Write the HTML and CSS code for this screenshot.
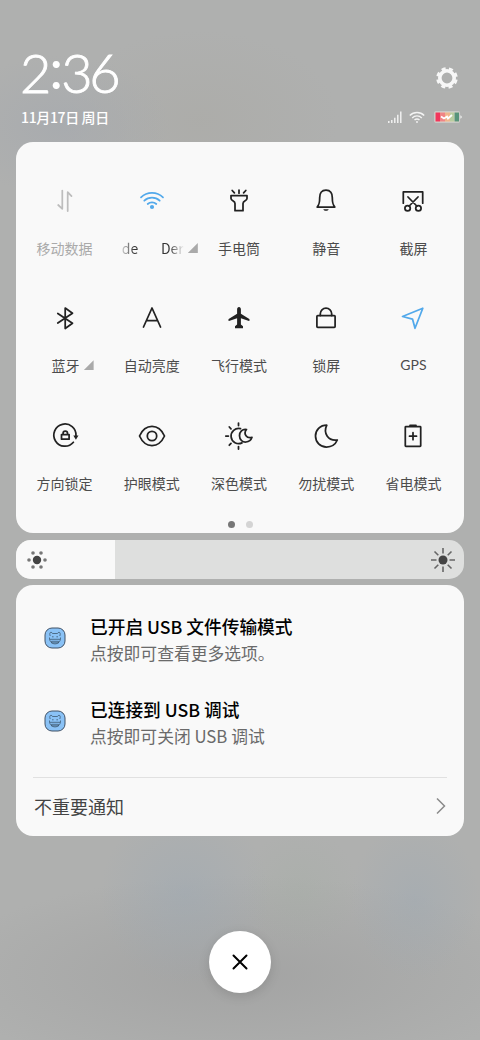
FILE: index.html
```html
<!DOCTYPE html>
<html lang="zh-CN">
<head>
<meta charset="utf-8">
<title>控制中心</title>
<link rel="stylesheet" href="styles.css">
</head>
<body>
<div class="shade">
  <header class="header">
    <div class="clock-row">
      <div class="clock"><span>2</span><span class="colon">:</span><span>3</span><span>6</span></div>
      <svg class="gear" width="24" height="24" viewBox="0 0 24 24"><circle cx="12" cy="12" r="7.2" fill="none" stroke="#f7f7f7" stroke-width="3.6"/><circle cx="12" cy="12" r="9.3" fill="none" stroke="#f7f7f7" stroke-width="3" stroke-dasharray="4 3.304" stroke-dashoffset="-1.65"/></svg>
    </div>
    <div class="date-row">
      <div class="date">11月17日 周日</div>
      <div class="status">
        <svg width="14" height="12" viewBox="0 0 14 12"><path d="M.8 12v-2M3.8 12V9M6.8 12V6.7M9.8 12V3.7M12.8 12V.5" stroke="#f4f4f4" stroke-width="1.4"/></svg>
        <svg class="wifi-small" width="16" height="12" viewBox="0 0 16 12" fill="none" stroke="#f4f4f4" stroke-width="1.4"><path d="M.8 4.5a10 10 0 0 1 14.4 0M3.2 6.9a6.8 6.8 0 0 1 9.6 0M5.500 9.100a3.600 3.600 0 0 1 5 0"/><circle cx="8" cy="11" r=".9" fill="#f4f4f4" stroke="none"/></svg>
        <svg class="battery" width="28" height="12" viewBox="0 0 28 12"><rect x=".6" y=".6" width="25" height="10.8" rx="1" fill="#ded5c6" stroke="#c9c9c9"/><path fill="#f1365c" d="M1.500 1.500h4.500v9H1.500z"/><path fill="#f08486" d="M6 1.500h5v9H6z"/><path fill="#f0b58c" d="M11 1.500h5v9h-5z"/><path fill="#b9cda0" d="M16 1.500h4v9h-4z"/><path fill="#57947a" d="M20.500 1.500H25v9h-4.500z"/><path d="M26.500 4.300c1.500.5 1.500 2.900 0 3.400z" fill="#fff"/><path d="m7 5.500 3 2 3-2 1 2 4-3.500" fill="none" stroke="#fff" stroke-width="1.800"/></svg>
      </div>
    </div>
  </header>

  <section class="panel toggles">
    <div class="grid">
      <div class="tile off"><svg class="icon" viewBox="0 0 30 30"><path d="M12.300 4.500v18.300L8.200 19M17.700 25V6.200l3.800 3.900"/></svg><div class="label">移动数据</div></div>
      <div class="tile"><svg class="icon blue" viewBox="0 0 30 30"><path d="M4 11.300a15.800 15.800 0 0 1 22 0M7.300 14.700a11.200 11.200 0 0 1 15.400 0M10.700 18a6.300 6.300 0 0 1 8.600 0"/><circle cx="15" cy="21" r="2.100" fill="#52a9eb" stroke="none"/></svg><div class="label wifi-label"><span class="ssid"><span class="fade-in">de</span><span class="fade-out">Der</span></span><i class="corner"></i></div></div>
      <div class="tile"><svg class="icon" viewBox="0 0 30 30"><path d="M7 9.500h16v3c0 2.500-4 2-4 5v7.200h-8v-7.200c0-3-4-2.500-4-5zM15 4v3.200M8.200 4.500l2.200 2.400M21.800 4.500l-2.200 2.400"/></svg><div class="label">手电筒</div></div>
      <div class="tile"><svg class="icon" viewBox="0 0 30 30"><path d="M15 4.200c-4.500 0-6.300 3.300-6.300 7.200 0 6-.6 7.200-2.500 9.600h17.600c-1.900-2.400-2.500-3.600-2.500-9.600 0-3.900-1.800-7.200-6.300-7.200z"/><path d="M12.300 23.200h5.400c-.8 2-4.600 2-5.400 0z" fill="#222" stroke="none"/></svg><div class="label">静音</div></div>
      <div class="tile"><svg class="icon" viewBox="0 0 30 30"><path d="M5.300 17.200V5.900h19.400v11.300M10 11l8.800 9M20 11l-8.800 9"/><circle cx="9.600" cy="22.200" r="2.700"/><circle cx="20.400" cy="22.200" r="2.700"/></svg><div class="label">截屏</div></div>

      <div class="tile"><svg class="icon" viewBox="0 0 30 30"><path d="m7.800 10.500 14.700 9.700-7.300 5.300V5l7.300 5.200L7.800 20"/></svg><div class="label with-corner">蓝牙<i class="corner"></i></div></div>
      <div class="tile"><svg class="icon" viewBox="0 0 30 30"><path d="M6.500 24 15 5l8.500 19M9.500 17.500h11"/></svg><div class="label">自动亮度</div></div>
      <div class="tile"><svg class="icon" viewBox="0 0 30 30"><path d="M15 4c1.200 0 1.900 1 1.900 2.300v4.500l8.400 5.200c.5.500.3 2.200-.3 2l-8.100-2.700v6.200l2.100 1.800v1.900h-8v-1.900l2.100-1.800v-6.200L5 18c-.6.200-.8-1.500-.3-2l8.400-5.200V6.300C13.100 5 13.800 4 15 4z" fill="#222" stroke="none"/></svg><div class="label">飞行模式</div></div>
      <div class="tile"><svg class="icon" viewBox="0 0 30 30"><rect x="5.900" y="12.600" width="18.200" height="11.700" rx=".8"/><path d="M9.300 12.500v-1.700a5.700 5.700 0 0 1 11.400 0v1.700"/></svg><div class="label">锁屏</div></div>
      <div class="tile"><svg class="icon blue" viewBox="0 0 30 30"><path d="M24.800 5.200 4.500 13.500l10 2.600 2.500 9.200z"/></svg><div class="label latin">GPS</div></div>

      <div class="tile"><svg class="icon" viewBox="0 0 30 30"><path d="M23.400 21.300A11.100 11.100 0 1 1 26 15"/><path d="M23.300 14.500h5.200l-2.600 4.200z" fill="#222" stroke="none"/><path d="M11.500 13.500h7.600v4.700h-7.600zM13.100 13.500v-1.300a2.200 2.200 0 0 1 4.400 0v1.300"/></svg><div class="label">方向锁定</div></div>
      <div class="tile"><svg class="icon" viewBox="0 0 30 30"><path d="M2.500 15c5.800-12.700 19.200-12.700 25 0-5.800 12.700-19.200 12.700-25 0z"/><circle cx="15" cy="15" r="4.700"/></svg><div class="label">护眼模式</div></div>
      <div class="tile"><svg class="icon" viewBox="0 0 30 30"><path d="M16.500 7.700a7.600 7.600 0 1 0 1.500 14.200M14.500 2v2.600M14.500 25.500V28M1.800 15h2.600M5.300 6l1.700 1.800M5.300 24.200 7 22.400"/><path d="M22.500 8.500c-4.200-.8-7 2.400-7 6.200 0 4.200 3.200 6.600 6.500 6.300 2.700-.2 5-1.700 6-4.700-2.500.6-4.700.2-6-1.600-1.500-2-.9-4.500.5-6.200z"/></svg><div class="label">深色模式</div></div>
      <div class="tile"><svg class="icon" viewBox="0 0 30 30"><path d="M15.800 4.200C9 4.200 4.500 9.200 4.500 15c0 6.200 4.800 11 11 11 4.800 0 9-2.800 10.800-7-4.500.6-8-.8-10.200-4-2.100-3.200-2-7.300-.3-10.800z"/></svg><div class="label">勿扰模式</div></div>
      <div class="tile"><svg class="icon" viewBox="0 0 30 30"><rect x="7.300" y="5.700" width="15.400" height="19.600" rx=".6"/><path d="M12 4.400h6M15 11.700v7M11.500 15.200h7"/></svg><div class="label">省电模式</div></div>
    </div>
    <div class="pager"><i class="dot active"></i><i class="dot"></i></div>
  </section>

  <section class="slider">
    <div class="slider-fill"><svg width="22" height="22" viewBox="0 0 22 22"><circle cx="11" cy="11" r="4.200" fill="#444"/><g fill="#777"><circle cx="3" cy="11" r="1.800"/><circle cx="19" cy="11" r="1.800"/><circle cx="7" cy="4" r="1.800"/><circle cx="15" cy="4" r="1.800"/><circle cx="7" cy="18" r="1.800"/><circle cx="15" cy="18" r="1.800"/></g></svg></div>
    <svg width="26" height="26" viewBox="0 0 26 26"><circle cx="13" cy="13" r="4.500" fill="#444"/><path d="M13 1v5.500M13 19.500V25M1 13h5.500M19.500 13H25M4.500 4.500l3.800 3.800M17.700 17.700l3.800 3.800M21.500 4.500l-3.800 3.800M8.300 17.700l-3.800 3.800" stroke="#666" stroke-width="1.600"/></svg>
  </section>

  <section class="panel notices">
    <article class="notice">
      <svg class="app" viewBox="0 0 22 22"><rect x="1" y="1" width="20" height="20" rx="7" fill="#8ac2f6" stroke="#415267"/><g fill="none" stroke="#3d5870" stroke-width=".8"><path d="M6.200 9c-.8-1.900-.4-3.800.8-3.800.8 0 1.200.8 1.500 1.300h5c.3-.5.700-1.300 1.500-1.300 1.200 0 1.600 1.900.8 3.800M5.500 10.500c-.5 8.500 11.500 8.500 11 0M6 12.300h10M7.500 14.300h7v1.500h-7zM8 9.800h1.600M12.400 9.800H14"/></g></svg>
      <div><h2>已开启 USB 文件传输模式</h2><p>点按即可查看更多选项。</p></div>
    </article>
    <article class="notice">
      <svg class="app" viewBox="0 0 22 22"><rect x="1" y="1" width="20" height="20" rx="7" fill="#8ac2f6" stroke="#415267"/><g fill="none" stroke="#3d5870" stroke-width=".8"><path d="M6.200 9c-.8-1.900-.4-3.800.8-3.800.8 0 1.200.8 1.500 1.300h5c.3-.5.700-1.300 1.500-1.300 1.200 0 1.600 1.900.8 3.800M5.500 10.500c-.5 8.500 11.500 8.500 11 0M6 12.300h10M7.500 14.300h7v1.500h-7zM8 9.800h1.600M12.400 9.800H14"/></g></svg>
      <div><h2>已连接到 USB 调试</h2><p>点按即可关闭 USB 调试</p></div>
    </article>
    <div class="more"><span>不重要通知</span><svg width="10" height="18" viewBox="0 0 10 18"><path d="m1 1.500 7.500 7.500L1 16.500" fill="none" stroke="#8a8a8a" stroke-width="1.500"/></svg></div>
  </section>

  <button class="close" aria-label="关闭"><svg width="16" height="16" viewBox="0 0 16 16"><path d="m1.500 1.500 13 13M14.500 1.500l-13 13" stroke="#000" stroke-width="2" stroke-linecap="round"/></svg></button>
</div>
</body>
</html>
```
FILE: styles.css
```css
* { box-sizing: border-box; }
body { margin: 0; font-family: "Noto Sans CJK SC", sans-serif; }
.shade {
  width: 480px; height: 1040px; padding: 48px 16px 0; overflow: hidden;
  display: flex; flex-direction: column;
  background:
    radial-gradient(ellipse 85px 90px at 185px 895px, rgba(155,168,180,.45), rgba(155,168,180,0)),
    radial-gradient(ellipse 65px 80px at 415px 900px, rgba(155,168,180,.4), rgba(155,168,180,0)),
    radial-gradient(ellipse 60px 60px at 300px 890px, rgba(160,173,160,.25), rgba(160,173,160,0)),
    radial-gradient(ellipse 300px 100px at 240px 975px, rgba(155,155,155,.6), rgba(155,155,155,0)),
    radial-gradient(ellipse 110px 70px at 60px 125px, rgba(164,168,174,.6), rgba(164,168,174,0)),
    radial-gradient(ellipse 140px 90px at 200px 120px, rgba(170,169,164,.5), rgba(170,169,164,0)),
    #afb0af;
}
.header { height: 94px; flex: none; color: #fff; }
.clock-row { height: 52px; display: flex; justify-content: space-between; align-items: center; padding: 0 5px 0 4px; }
.clock { display: flex; font: 300 54px/52px Lato, sans-serif; letter-spacing: -3.5px; margin-top: -3px; -webkit-text-stroke: .9px #fff; }
.colon { padding: 0 2px; margin-top: -5px; -webkit-text-stroke-width: 2px; }
.gear { margin-top: 8px; }
.date-row { height: 34px; display: flex; justify-content: space-between; align-items: center; padding: 0 2px 0 5px; }
.date { font-size: 14px; font-weight: 500; line-height: 20px; letter-spacing: -.35px; }
.status { display: flex; align-items: center; }
.wifi-small { margin-left: 7px; }
.battery { margin-left: 9px; }
.panel { background: #f9f9f9; border-radius: 17px; flex: none; }
.toggles { height: 391px; padding: 42px 7px 0 5px; }
.grid { display: grid; grid-template-columns: repeat(5, minmax(0, 1fr)); grid-auto-rows: 117.3px; height: 336px; }
.tile { display: flex; flex-direction: column; align-items: center; }
.icon { width: 30px; height: 30px; margin-top: 2px; fill: none; stroke: #222; stroke-width: 1.75; stroke-linecap: round; stroke-linejoin: round; }
.blue { stroke: #52a9eb; }
.off .icon { stroke: #bdbdbd; }
.label { height: 22px; margin-top: 21px; font-size: 14px; line-height: 22px; color: #4c4c4c; white-space: nowrap; }
.off .label { color: #aaa; }
.latin { font-family: Lato, sans-serif; }
.corner { width: 10px; height: 10px; background: #aaa; clip-path: polygon(100% 0, 100% 100%, 0 100%); }
.wifi-label { width: 76px; display: flex; align-items: center; gap: 4px; margin-left: 16px; }
.ssid { width: 62px; display: flex; justify-content: space-between; overflow: hidden; }
.fade-in { background: linear-gradient(90deg, #ccc, #333 80%); background-clip: text; color: transparent; }
.fade-out { background: linear-gradient(90deg, #333 35%, #f9f9f9); background-clip: text; color: transparent; }
.with-corner { display: flex; align-items: center; gap: 4px; margin-left: 16px; }
.pager { display: flex; justify-content: center; gap: 11px; padding-left: 2px; margin-top: 1px; }
.dot { width: 7px; height: 7px; border-radius: 50%; background: #d4d4d4; }
.dot.active { background: #777; }
.slider { height: 39px; flex: none; margin: 7px 0 6px; border-radius: 15px; overflow: hidden; background: #dedfde; display: flex; align-items: center; justify-content: space-between; padding-right: 8px; }
.slider-fill { width: 99px; height: 100%; background: #f9f9f9; display: flex; align-items: center; padding-left: 10px; }
.notices { height: 251px; padding: 27px 17px 0; }
.notice { height: 83px; display: flex; gap: 24px; padding-left: 11px; }
.app { width: 22px; height: 22px; margin-top: 15px; }
.notice h2 { margin: 0; font-size: 17.7px; line-height: 28px; font-weight: 500; color: #000; white-space: nowrap; }
.notice p { margin: 0; font-size: 16.8px; line-height: 27px; font-weight: 400; color: #6a6a6a; white-space: nowrap; }
.more { height: 58px; margin-top: -1px; border-top: 1px solid #e1e1e1; display: flex; justify-content: space-between; align-items: center; font-size: 18px; line-height: 26px; color: #444; padding: 0 1px 1px; }
.close { width: 62px; height: 62px; flex: none; border: 0; padding: 0; border-radius: 50%; background: #fff; margin: 95px auto 0; display: flex; align-items: center; justify-content: center; box-shadow: 0 3px 12px rgba(0,0,0,.12); }
```
